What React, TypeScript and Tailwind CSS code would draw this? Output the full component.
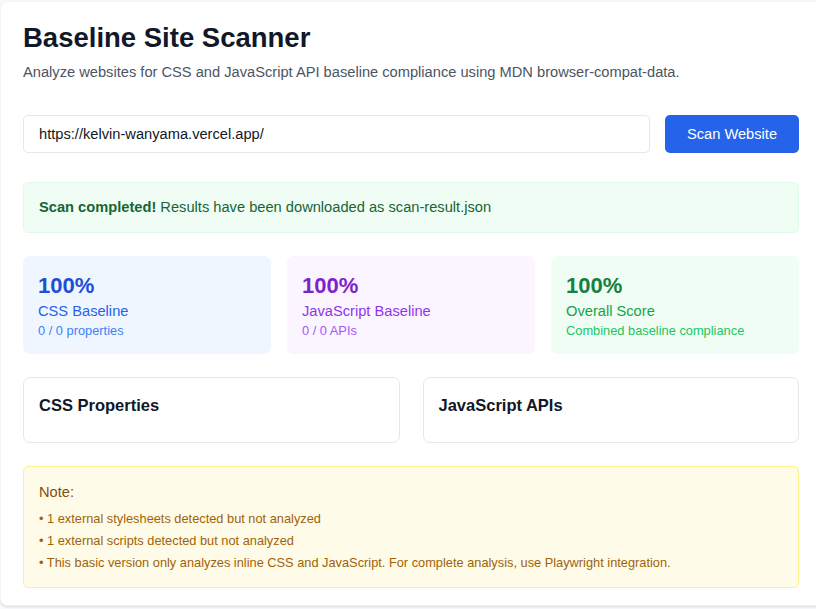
import { useState } from "react";

// --- Sub-components ---

type StatProps = {
  value: string;
  label: string;
  sub: string;
  box: string;
  valueColor: string;
  labelColor: string;
  subColor: string;
};

const StatCard = ({ value, label, sub, box, valueColor, labelColor, subColor }: StatProps) => (
  <div className={`h-[98px] rounded-[7px] px-[15px] pt-[15px] ${box}`}>
    <div className={`text-[22px] leading-[29px] font-bold ${valueColor}`}>{value}</div>
    <div className={`text-[14.67px] leading-[22px] ${labelColor}`}>{label}</div>
    <div className={`text-[12.83px] leading-[18px] ${subColor}`}>{sub}</div>
  </div>
);

const ListBox = ({ title }: { title: string }) => (
  <div className="h-[66px] rounded-[7px] border border-[#e5e7eb] px-[15px] pt-[15px]">
    <h3 className="text-[16.5px] leading-[25px] font-bold text-[#111827]">{title}</h3>
  </div>
);

// --- Main Component ---

export default function App() {
  const [url, setUrl] = useState("https://kelvin-wanyama.vercel.app/");

  const notes = [
    "1 external stylesheets detected but not analyzed",
    "1 external scripts detected but not analyzed",
    "This basic version only analyzes inline CSS and JavaScript. For complete analysis, use Playwright integration.",
  ];

  return (
    <div className="h-screen overflow-hidden bg-[#f9fafb] font-['Liberation_Sans',Arial,sans-serif]">
      <div className="mt-px w-[822px] rounded-[7px] border border-[#f3f4f6] bg-white px-[22px] pt-[20px] pb-[17px] shadow-sm">
        <h1 className="text-[27.5px] leading-[32px] font-bold text-[#111827]">Baseline Site Scanner</h1>
        <p className="mt-[8px] text-[14.67px] leading-[21.6px] text-[#4b5563]">
          Analyze websites for CSS and JavaScript API baseline compliance using MDN browser-compat-data.
        </p>

        {/* Scan form */}
        <div className="mt-[31px] flex gap-[15px]">
          <input
            value={url}
            onChange={(e) => setUrl(e.target.value)}
            className="h-[38px] flex-1 rounded-[5px] border border-[#e5e7eb] px-[15px] text-[14.67px] text-[#111827] outline-none"
          />
          <button className="h-[38px] w-[134px] rounded-[5px] bg-[#2563eb] text-[14.67px] text-white">
            Scan Website
          </button>
        </div>

        {/* Success */}
        <div className="mt-[29px] flex h-[51px] items-center rounded-[5px] border border-[#dcfce7] bg-[#f0fdf4] px-[15px] text-[14.67px] text-[#166534]">
          <span className="font-bold">Scan completed!</span>&nbsp;Results have been downloaded as scan-result.json
        </div>

        {/* Stats */}
        <div className="mt-[23px] grid grid-cols-3 gap-[16px]">
          <StatCard
            value="100%"
            label="CSS Baseline"
            sub="0 / 0 properties"
            box="bg-[#eff6ff]"
            valueColor="text-[#1d4ed8]"
            labelColor="text-[#2563eb]"
            subColor="text-[#3b82f6]"
          />
          <StatCard
            value="100%"
            label="JavaScript Baseline"
            sub="0 / 0 APIs"
            box="bg-[#faf5ff]"
            valueColor="text-[#7e22ce]"
            labelColor="text-[#9333ea]"
            subColor="text-[#a855f7]"
          />
          <StatCard
            value="100%"
            label="Overall Score"
            sub="Combined baseline compliance"
            box="bg-[#f0fdf4]"
            valueColor="text-[#15803d]"
            labelColor="text-[#16a34a]"
            subColor="text-[#22c55e]"
          />
        </div>

        {/* Results */}
        <div className="mt-[23px] grid grid-cols-2 gap-[23px]">
          <ListBox title="CSS Properties" />
          <ListBox title="JavaScript APIs" />
        </div>

        {/* Note */}
        <div className="mt-[23px] h-[122px] rounded-[5px] border border-[#fef08a] bg-[#fefce8] px-[15px] pt-[15px]">
          <div className="text-[14.67px] leading-[21.6px] text-[#854d0e]">Note:</div>
          <ul className="mt-[7px] flex flex-col gap-[4px]">
            {notes.map((n) => (
              <li key={n} className="text-[12.8px] leading-[18px] text-[#a16207]">
                • {n}
              </li>
            ))}
          </ul>
        </div>
      </div>
    </div>
  );
}
